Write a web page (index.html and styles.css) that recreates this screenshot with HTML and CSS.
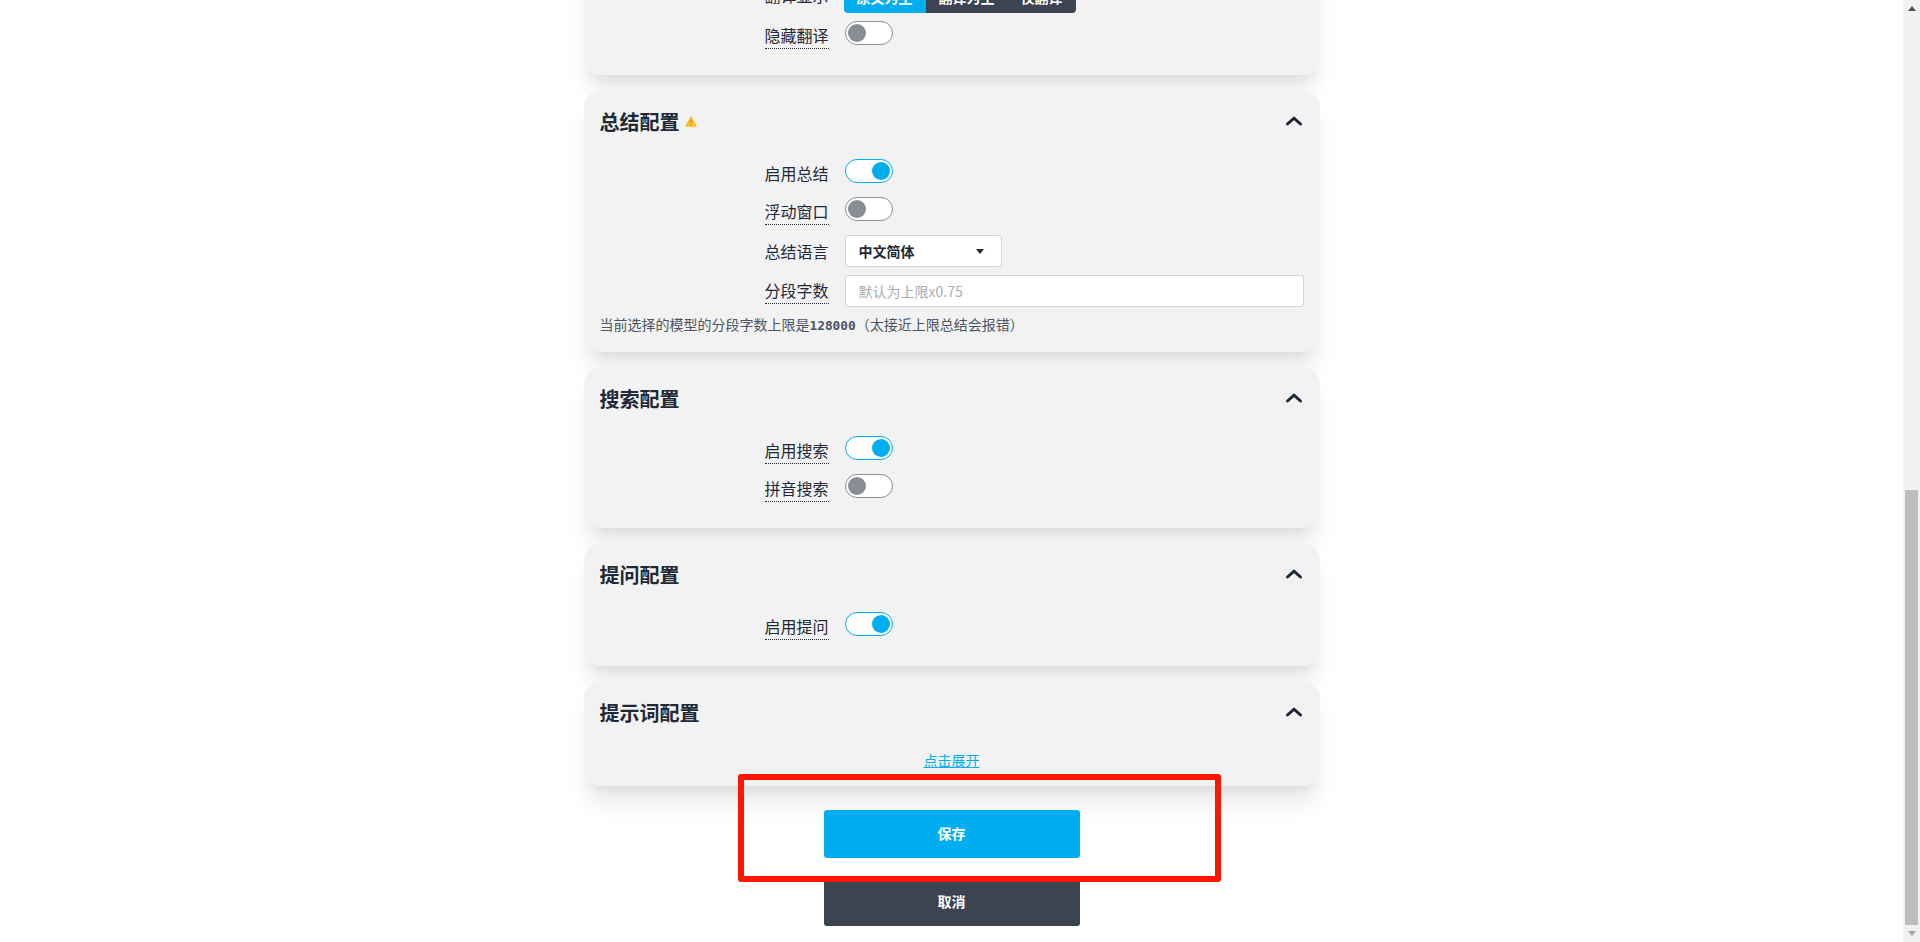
FILE: index.html
```html
<!DOCTYPE html>
<html lang="zh-CN">
<head>
<meta charset="utf-8">
<title>设置</title>
<link rel="stylesheet" href="styles.css">
</head>
<body>
<div class="app">
  <main class="page">
    <div class="container">
      <section class="card card-first">
        <div class="card-head"><h2 class="card-title">翻译配置</h2><svg class="chevron" viewBox="0 0 16 10"><path d="M1.500 8 8 2.200 14.500 8"/></svg></div>
        <div class="card-body">
          <div class="row"><span class="label plain">翻译显示</span>
            <div class="btn-group"><button class="seg seg-on">原文为主</button><button class="seg">翻译为主</button><button class="seg">仅翻译</button></div>
          </div>
          <div class="row"><span class="label tip">隐藏翻译</span><span class="toggle"><span class="knob"></span></span></div>
        </div>
      </section>

      <section class="card">
        <div class="card-head"><h2 class="card-title">总结配置<svg class="warn" viewBox="0 0 12 11"><path class="warn-bg" d="M6 0.800 11.400 10.200H0.600Z"/><path class="warn-mark" d="M6 3.800v3.200M6 8v1.200"/></svg></h2><svg class="chevron" viewBox="0 0 16 10"><path d="M1.500 8 8 2.200 14.500 8"/></svg></div>
        <div class="card-body">
          <div class="row"><span class="label plain">启用总结</span><span class="toggle on"><span class="knob"></span></span></div>
          <div class="row"><span class="label tip">浮动窗口</span><span class="toggle"><span class="knob"></span></span></div>
          <div class="row"><span class="label plain field-label">总结语言</span>
            <div class="select"><span>中文简体</span><svg class="caret" viewBox="0 0 8 5"><path d="M0 0h8L4 5Z"/></svg></div>
          </div>
          <div class="row"><span class="label tip field-label">分段字数</span><input class="input" type="text" placeholder="默认为上限x0.75"></div>
          <p class="help">当前选择的模型的分段字数上限是<code class="mono">128000</code>（太接近上限总结会报错）</p>
        </div>
      </section>

      <section class="card">
        <div class="card-head"><h2 class="card-title">搜索配置</h2><svg class="chevron" viewBox="0 0 16 10"><path d="M1.500 8 8 2.200 14.500 8"/></svg></div>
        <div class="card-body">
          <div class="row"><span class="label tip">启用搜索</span><span class="toggle on"><span class="knob"></span></span></div>
          <div class="row"><span class="label tip">拼音搜索</span><span class="toggle"><span class="knob"></span></span></div>
        </div>
      </section>

      <section class="card">
        <div class="card-head"><h2 class="card-title">提问配置</h2><svg class="chevron" viewBox="0 0 16 10"><path d="M1.500 8 8 2.200 14.500 8"/></svg></div>
        <div class="card-body">
          <div class="row"><span class="label tip">启用提问</span><span class="toggle on"><span class="knob"></span></span></div>
        </div>
      </section>

      <section class="card">
        <div class="card-head"><h2 class="card-title">提示词配置</h2><svg class="chevron" viewBox="0 0 16 10"><path d="M1.500 8 8 2.200 14.500 8"/></svg></div>
        <div class="card-body expand"><a class="link" href="#">点击展开</a></div>
      </section>

      <div class="actions">
        <button class="btn btn-primary">保存</button>
        <button class="btn btn-neutral">取消</button>
      </div>
    </div>
    <div class="annotation"></div>
  </main>
  <aside class="scrollbar">
    <div class="sb-btn"><svg class="sb-arrow up" viewBox="0 0 8 5"><path d="M4 0l4 5H0Z"/></svg></div>
    <div class="sb-space"></div>
    <div class="sb-thumb"></div>
    <div class="sb-btn"><svg class="sb-arrow down" viewBox="0 0 8 5"><path d="M0 0h8L4 5Z"/></svg></div>
  </aside>
</div>
</body>
</html>
```

FILE: styles.css
```css
* { box-sizing: border-box; }
html, body { margin: 0; height: 100%; overflow: hidden; background: #fff; }
body {
  font-family: "Noto Sans CJK SC", "Noto Sans", sans-serif;
  font-size: 16px;
  line-height: 24px;
  color: #1f2937;
}
.app { display: flex; height: 942px; }
.page { position: relative; flex: 1; min-width: 0; overflow: hidden; }
.container { width: 736px; margin: 0 auto; display: flex; flex-direction: column; gap: 16px; }

.card { background: #f2f2f2; border-radius: 16px; box-shadow: 0 20px 25px -5px rgba(0,0,0,.1), 0 10px 10px -5px rgba(0,0,0,.04); }
.card-first { margin-top: -87px; }
.card-head { height: 60px; padding: 0 16px; display: flex; align-items: center; justify-content: space-between; }
.card-title { margin: 0; padding-top: 2px; font-size: 20px; line-height: 28px; font-weight: 700; color: #1f2937; display: flex; align-items: center; }
.chevron { width: 16px; height: 10px; margin-right: 2px; fill: none; stroke: #1a2538; stroke-width: 3; stroke-linecap: round; overflow: visible; }
.warn { width: 12px; height: 11px; margin: -2px 0 0 5px; }
.warn-bg { fill: #fbbd23; stroke: #fbbd23; stroke-width: 1; stroke-linejoin: round; }
.warn-mark { fill: none; stroke: #a8801c; stroke-width: 1; }

.card-body { padding: 8px 16px 16px; }
.row { display: flex; align-items: flex-start; gap: 16px; margin-bottom: 8px; min-height: 30px; }
.label { flex: 0 0 229px; display: flex; justify-content: flex-end; margin-top: 3px; padding-bottom: 2px; font-size: 16px; line-height: 22px; color: #1f2937; position: relative; }
.field-label { margin-top: 4px; }
.plain.field-label { margin-top: 5px; }
.tip::after { content: ""; position: absolute; right: 0; bottom: -1px; width: 64px; border-bottom: 1px dotted #1f2937; }

.toggle { display: flex; width: 48px; height: 24px; padding: 2px; border: 1px solid #8a8d95; border-radius: 12px; background: #fff; }
.knob { width: 18px; height: 18px; border-radius: 50%; background: #8a8d95; }
.toggle.on { border-color: #00adef; justify-content: flex-end; }
.toggle.on .knob { background: #00adef; }

.btn-group { display: flex; height: 32px; margin-left: -1px; border-radius: 4px; overflow: hidden; }
.seg { border: 0; padding: 0 13px; height: 32px; font: 700 14px/20px "Noto Sans CJK SC", sans-serif; color: #fff; background: #3d4451; }
.seg-on { background: #00adef; }

.select { width: 157px; height: 32px; display: flex; align-items: center; justify-content: space-between; padding: 0 17px 0 13px; background: #fff; border: 1px solid #d4d4d4; border-radius: 3px; font-size: 14px; font-weight: 700; color: #1f2937; }
.caret { width: 8px; height: 5px; fill: #1f2937; }
.input { flex: 1; min-width: 0; height: 32px; padding: 0 13px; background: #fff; border: 1px solid #d4d4d4; border-radius: 3px; font: 14px/20px "Noto Sans CJK SC", sans-serif; color: #1f2937; outline: none; }
.input::placeholder { color: #a9adb5; opacity: 1; }

.help { margin: -1px 0 0; padding-bottom: 2px; font-size: 14px; line-height: 20px; color: #4b5563; }
.mono { font-family: "DejaVu Sans Mono", monospace; font-size: 12.800px; font-weight: 700; line-height: 1; }

.expand { text-align: center; }
.link { display: block; font-size: 14px; line-height: 20px; color: #00adef; text-decoration: underline; }

.actions { display: flex; flex-direction: column; align-items: center; gap: 20px; margin-top: 8px; padding-bottom: 16px; }
.btn { width: 256px; height: 48px; padding: 0 0 2px; border: 0; border-radius: 3px; font: 700 14px/20px "Noto Sans CJK SC", sans-serif; color: #fff; }
.btn-primary { background: #00adef; }
.btn-neutral { background: #3d4451; }

.annotation { position: absolute; left: 738px; top: 774px; width: 483px; height: 108px; border: 6px solid #ff1500; border-radius: 3px; }

.scrollbar { flex: 0 0 17px; display: flex; flex-direction: column; align-items: center; background: #f1f1f1; }
.sb-btn { height: 17px; width: 100%; display: flex; align-items: center; justify-content: center; }
.sb-space { flex: 1; }
.sb-thumb { width: 13px; height: 435px; background: #bdbdbd; }
.sb-arrow { width: 8px; height: 5px; }
.sb-arrow.up { fill: #505050; }
.sb-arrow.down { fill: #a3a3a3; }
```
